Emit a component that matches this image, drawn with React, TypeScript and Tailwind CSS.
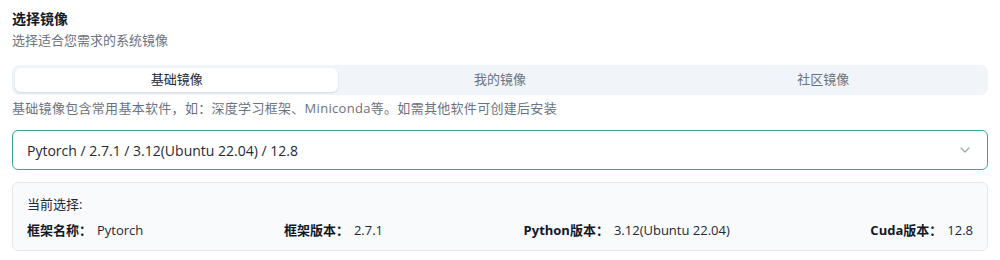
import React from "react";

export default function App() {
  const font = { fontFamily: '"Open Sans", "Noto Sans CJK SC", sans-serif' };
  return (
    <div className="w-[1000px] h-[260px] bg-white px-3 pt-[9px] text-[#1f2937]" style={font}>
      <div className="text-[14px] font-bold leading-[20px] text-[#111827]">选择镜像</div>
      <div className="text-[13px] leading-[20px] text-[#6b7280] mt-[1px]">选择适合您需求的系统镜像</div>
      <div className="mt-[15px] h-[30px] rounded-[7px] bg-[#f1f4f8] p-[3px] flex">
        <div className="flex-1 rounded-[6px] bg-white shadow-[0_1px_2px_rgba(0,0,0,0.12)] flex items-center justify-center text-[13px] text-[#1f2937]">基础镜像</div>
        <div className="flex-1 flex items-center justify-center text-[13px] text-[#6b7280]">我的镜像</div>
        <div className="flex-1 flex items-center justify-center text-[13px] text-[#6b7280]">社区镜像</div>
      </div>
      <div className="mt-[3px] text-[13px] leading-[20px] tracking-[0.3px] text-[#6b7280]">基础镜像包含常用基本软件，如：深度学习框架、Miniconda等。如需其他软件可创建后安装</div>
      <div className="mt-[12px] h-[40px] rounded-[6px] border border-[#3aa891] flex items-center justify-between pl-[14px] pr-[17px]">
        <span className="text-[14px] text-[#1f2937]">Pytorch / 2.7.1 / 3.12(Ubuntu 22.04) / 12.8</span>
        <svg width="10" height="6" viewBox="0 0 10 6" fill="none">
          <path d="M1 1l4 4 4-4" stroke="#9ca3af" strokeWidth="1.2" strokeLinecap="round" strokeLinejoin="round" />
        </svg>
      </div>
      <div className="mt-[12px] rounded-[6px] border border-[#e5e7eb] bg-[#f8fafc] pl-[14px] pr-[14px] pt-[11px] pb-[10px]">
        <div className="text-[13px] leading-[20px] text-[#1f2937]">当前选择:</div>
        <div className="mt-[6px] flex justify-between text-[13px] leading-[20px]">
          <div><span className="font-bold text-[#111827]">框架名称：</span><span className="ml-[5px] text-[#1f2937]">Pytorch</span></div>
          <div><span className="font-bold text-[#111827]">框架版本：</span><span className="ml-[5px] text-[#1f2937]">2.7.1</span></div>
          <div><span className="font-bold text-[#111827]">Python版本：</span><span className="ml-[5px] text-[#1f2937]">3.12(Ubuntu 22.04)</span></div>
          <div><span className="font-bold text-[#111827]">Cuda版本：</span><span className="ml-[5px] text-[#1f2937]">12.8</span></div>
        </div>
      </div>
    </div>
  );
}
